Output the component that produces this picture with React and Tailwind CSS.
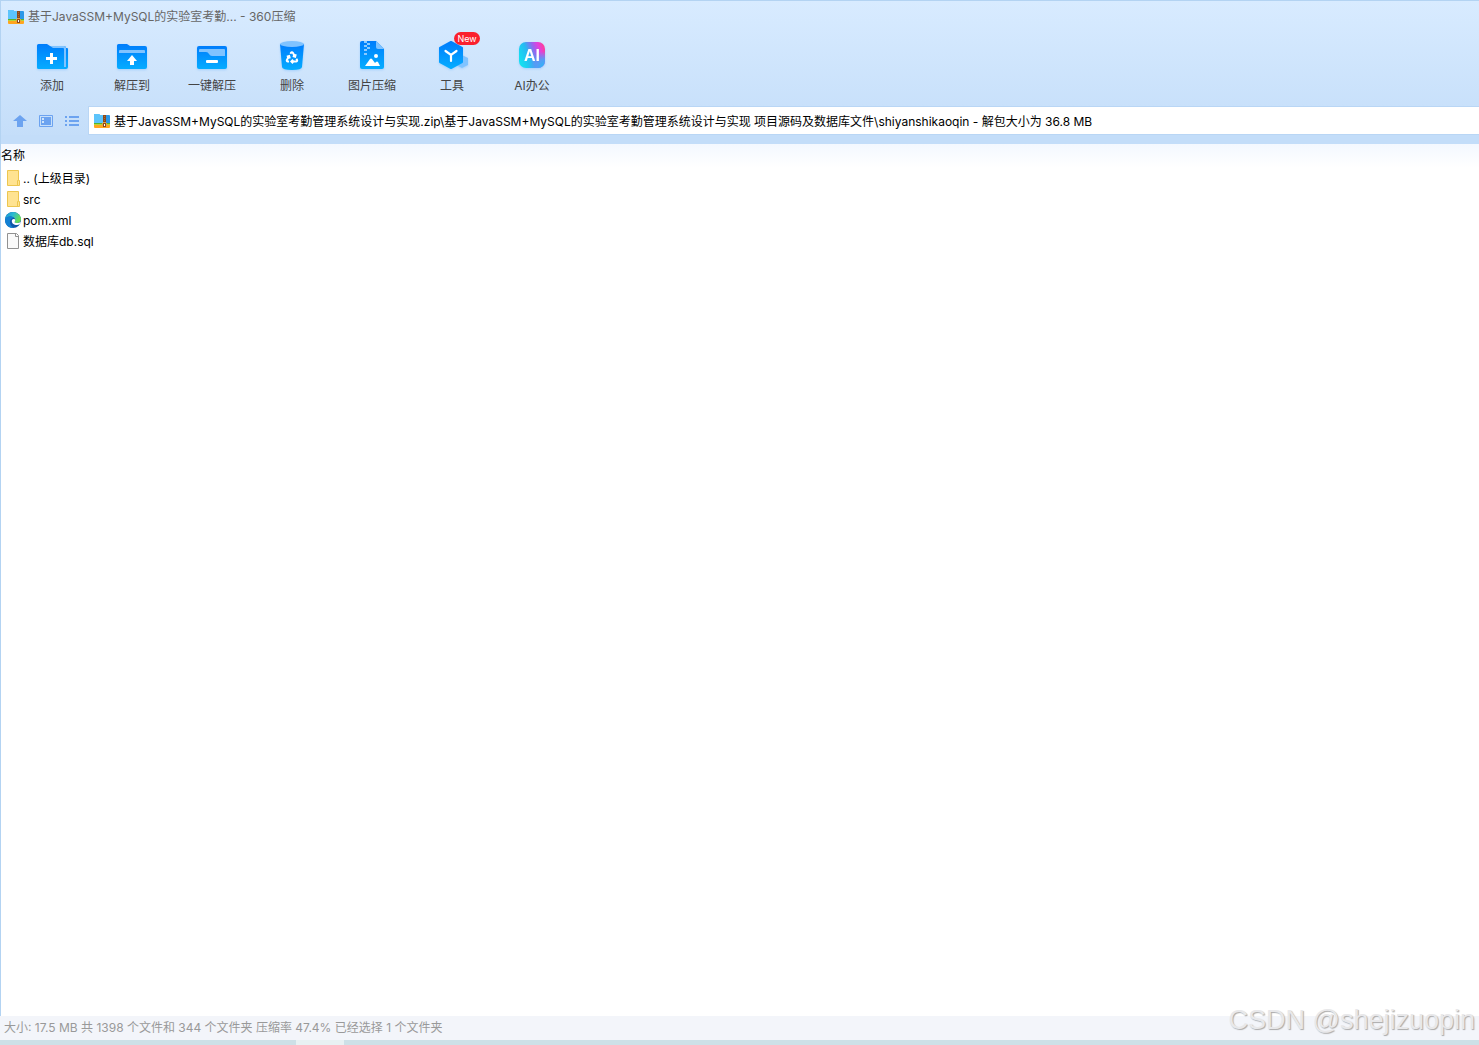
import { useState } from "react"

const archivePath =
  "基于JavaSSM+MySQL的实验室考勤管理系统设计与实现.zip\\基于JavaSSM+MySQL的实验室考勤管理系统设计与实现 项目源码及数据库文件\\shiyanshikaoqin - 解包大小为 36.8 MB"

function ArchiveIcon() {
  return (
    <svg width="16" height="14" viewBox="0 0 16 14" className="shrink-0" aria-hidden="true">
      <path d="M0 1q0-1 1-1h4l1 1h9q1 0 1 1v9H0z" fill="#2a97e8" />
      <path d="M0 1q0-1 1-1h4l1 1h4v9H0z" fill="#5cc4fb" />
      <path d="M0 9h16v2H0z" fill="#57b32c" />
      <path d="M0 11h16v2q0 1-1 1H1q-1 0-1-1z" fill="#ffa51f" />
      <path d="M0 10h16v1H0z" fill="#b5d63c" />
      <path d="M9 1h3v12H9z" fill="#8c4a1c" />
      <path d="M10 2h1v1h-1zM10 4h1v1h-1zM10 6h1v1h-1z" fill="#b06a2e" />
      <path d="M9 8h3v1H9zM8 9h1v3H8zM12 9h1v3h-1z" fill="#e8a23c" />
      <path d="M10 10h1v2h-1z" fill="#fff" />
    </svg>
  )
}

function Blue({ id }) {
  return (
    <defs>
      <linearGradient id={id} x1="0" y1="0" x2="0" y2="1">
        <stop offset="0" stopColor="#007dfc" />
        <stop offset="1" stopColor="#05acff" />
      </linearGradient>
    </defs>
  )
}

function AddIcon() {
  return (
    <>
      <Blue id="add" />
      <path d="M1 5.500Q1 4 2.500 4H11l3 2h14q2 0 2 2h1q1 0 1 1v18q0 2-2 2H2.500Q1 29 1 27.500z" fill="url(#add)" />
      <path d="M14 6h14q2 0 2 2v19h-2V9q0-1-1-1H17z" fill="#80c3ff" />
      <path d="M14 13h3v4h4v3h-4v4h-3v-4h-4v-3h4z" fill="#fff" />
    </>
  )
}

function ExtractIcon() {
  return (
    <>
      <Blue id="extract" />
      <path d="M1 5.500Q1 4 2.500 4H11l3 2h15q2 0 2 2v19q0 2-2 2H3q-2 0-2-2z" fill="url(#extract)" />
      <path d="M3 13v-2q0-1 1-1h24q1 0 1 1v2z" fill="#80c3ff" />
      <path d="M16 15l5 6h-3v4h-4v-4h-3z" fill="#fff" />
    </>
  )
}

function QuickExtractIcon() {
  return (
    <>
      <Blue id="quick" />
      <rect x="1" y="6" width="30" height="23" rx="2" fill="url(#quick)" />
      <path d="M3 10q0-1 1-1h24q1 0 1 1v6H16q-2 0-3-2-1-2-3-2H3z" fill="#80c3ff" />
      <rect x="10" y="20" width="12" height="3" rx="1" fill="#fff" />
    </>
  )
}

function DeleteIcon() {
  return (
    <>
      <Blue id="delete" />
      <path d="M4 4h24l-2 23q-.3 3-10 3T6 27z" fill="url(#delete)" />
      <ellipse cx="16" cy="4" rx="12" ry="3" fill="#80c3ff" />
      <g transform="translate(9 10.500) scale(.58)" fill="none" stroke="#fff" strokeWidth="3.400">
        <path d="M7 19H4.800a1.800 1.800 0 0 1-1.600-2.700L7.200 9.500M11 19h8.200a1.800 1.800 0 0 0 1.600-2.700l-1.200-2M14 16l-3 3 3 3M8.300 13.600L7.200 9.500 3.100 10.600M9.300 5.800l1.100-1.900a1.800 1.800 0 0 1 3.100 0l4 6.900M13.400 9.600l4.100 1.100 1.100-4.100" />
      </g>
    </>
  )
}

function ImageZipIcon() {
  return (
    <>
      <Blue id="image" />
      <path d="M4 3q0-2 2-2h14l8 8v18q0 2-2 2H6q-2 0-2-2z" fill="url(#image)" />
      <path d="M20 1l8 8h-6q-2 0-2-2z" fill="#80c3ff" />
      <path d="M8 1h3v2H8zM11 3h3v2h-3zM8 5h3v2H8zM11 7h3v2h-3zM8 9h3v2H8zM8 13h3v2H8z" fill="#8ccaff" />
      <circle cx="20" cy="16" r="2" fill="#fff" />
      <path d="M9 26l5-7q1-1 2 0l3 4 1-1q1-1 2 0l2 4z" fill="#fff" />
    </>
  )
}

function ToolsIcon() {
  return (
    <>
      <Blue id="tools" />
      <path d="M26 15l6 3v7l-6 3-6-3z" fill="#80c3ff" />
      <path d="M15 2l11 6v14l-11 6-11-6V8z" fill="url(#tools)" stroke="url(#tools)" strokeWidth="2" strokeLinejoin="round" />
      <path d="M9.500 11l5.500 4 5.500-4M15 15v6" fill="none" stroke="#fff" strokeWidth="2.200" strokeLinecap="round" />
    </>
  )
}

function AiIcon() {
  return (
    <>
      <defs>
        <linearGradient id="ai" x1="0" y1=".6" x2="1" y2=".2">
          <stop offset="0" stopColor="#14dff0" />
          <stop offset=".35" stopColor="#27b9f2" />
          <stop offset=".62" stopColor="#9b62ee" />
          <stop offset=".8" stopColor="#e33fdd" />
          <stop offset="1" stopColor="#ff3f91" />
        </linearGradient>
        <radialGradient id="aiCorner" cx="1" cy="1" r=".65">
          <stop offset="0" stopColor="#20bdf7" />
          <stop offset=".5" stopColor="#559cf5" />
          <stop offset="1" stopColor="#559cf5" stopOpacity="0" />
        </radialGradient>
      </defs>
      <rect x="3" y="2" width="26" height="26" rx="7" fill="url(#ai)" />
      <rect x="3" y="2" width="26" height="26" rx="7" fill="url(#aiCorner)" />
      <text x="16" y="21" textAnchor="middle" fill="#fff" fontSize="16" fontWeight="700" fontFamily="Liberation Sans, sans-serif">
        AI
      </text>
    </>
  )
}

const tools = [
  { label: "添加", Icon: AddIcon },
  { label: "解压到", Icon: ExtractIcon },
  { label: "一键解压", Icon: QuickExtractIcon },
  { label: "删除", Icon: DeleteIcon },
  { label: "图片压缩", Icon: ImageZipIcon },
  { label: "工具", Icon: ToolsIcon, badge: "New" },
  { label: "AI办公", Icon: AiIcon },
]

function ToolButton({ label, Icon, badge }) {
  return (
    <button type="button" className="relative flex w-20 flex-col items-center gap-1 text-[#444]">
      <svg width="32" height="34" viewBox="0 0 32 34" className="drop-shadow-xs drop-shadow-[#0080ff]/20" aria-hidden="true">
        <Icon />
      </svg>
      <span className="leading-4">{label}</span>
      {badge && (
        <span className="absolute -top-2 left-[42px] flex h-[13px] w-[26px] items-center justify-center rounded-full bg-[#fa202d] text-[9px] text-white">
          {badge}
        </span>
      )}
    </button>
  )
}

function FolderIcon() {
  return (
    <svg width="16" height="16" viewBox="0 0 16 16" aria-hidden="true">
      <path d="M2.500.5h11v10h1v5h-12z" fill="#ffe391" stroke="#edc64f" />
      <path d="M12.500 15v-4.500h1" fill="none" stroke="#edc64f" />
    </svg>
  )
}

function EdgeIcon() {
  return (
    <svg width="16" height="16" viewBox="0 0 16 16" aria-hidden="true">
      <defs>
        <linearGradient id="edgeTop" x1="0" y1="0" x2="1" y2=".4">
          <stop offset="0" stopColor="#168fd5" />
          <stop offset=".5" stopColor="#2bb9d3" />
          <stop offset="1" stopColor="#67df55" />
        </linearGradient>
      </defs>
      <circle cx="8" cy="8" r="8" fill="#0f57a8" />
      <path d="M0 8C0 3 4 0 8 0c5 0 8 4 8 7 0 2.500-2 4-4 4-1.500 0-2.500-.5-2.500-1 0-.4.7-.8.7-2C10.200 6 8 4.500 5.500 4.500 2.500 4.500.5 6 0 8z" fill="url(#edgeTop)" />
      <path d="M0 8c.5-2.400 2.700-3.500 5.200-3.500 1.700 0 3 .6 3.800 1.500C6.500 5.500 5 8 5 10c0 3 2 5 4 5.900C4 16.500 0 13 0 8z" fill="#1380d3" />
      <path d="M7 8c.8-1.300 3-1.200 3.200.2.1 1-.7 1.400-.7 1.900 0 .6 1.200 1 2.500 1 1.400 0 2.800-.5 3.800-1.300q-.2 1.200-.8 2c-1 .8-2 1.200-3 1.200C9 13 6 11 7 8z" fill="#fff" />
    </svg>
  )
}

function FileIcon() {
  return (
    <svg width="16" height="16" viewBox="0 0 16 16" aria-hidden="true">
      <path d="M2.500.5h9l2 2v13h-11z" fill="#fafafa" stroke="#919191" />
      <path d="M10.500 1v2.500H13" fill="none" stroke="#919191" />
    </svg>
  )
}

const files = [
  { name: ".. (上级目录)", Icon: FolderIcon },
  { name: "src", Icon: FolderIcon },
  { name: "pom.xml", Icon: EdgeIcon },
  { name: "数据库db.sql", Icon: FileIcon },
]

export default function App() {
  const [path, setPath] = useState(archivePath)

  return (
    <div className="relative flex h-screen flex-col overflow-hidden bg-white font-['Inter','Noto_Sans_CJK_SC',sans-serif] text-[12px] text-black">
      <header className="flex flex-col border-t border-l border-[#b3d3f2] bg-linear-to-b from-[#d8ebff] to-[#c3ddf9]">
        <div className="flex h-[31px] items-center gap-1 pl-[7px] text-[#666]">
          <ArchiveIcon />
          <h1>基于JavaSSM+MySQL的实验室考勤... - 360压缩</h1>
        </div>

        <nav className="flex h-[74px] pt-2 pl-[11px]">
          {tools.map((tool) => (
            <ToolButton key={tool.label} {...tool} />
          ))}
        </nav>

        <div className="flex h-[29px] items-center">
          <div className="flex w-[87px] shrink-0 items-center gap-3 pl-3 text-[#6ca3f0]">
            <button type="button" aria-label="向上">
              <svg width="14" height="14" viewBox="0 0 14 14" fill="currentColor" aria-hidden="true">
                <path d="M7 1l7 6h-4v6H4V7H0z" />
              </svg>
            </button>
            <button type="button" aria-label="预览">
              <svg width="14" height="14" viewBox="0 0 14 14" fill="currentColor" aria-hidden="true">
                <path d="M.5 1.500h13v11H.5z" fill="none" stroke="currentColor" />
                <path d="M2 3h10v8H2z" />
                <path d="M3 4h2v2H3zM3 7h2v2H3z" fill="#cfe4fb" />
              </svg>
            </button>
            <button type="button" aria-label="列表">
              <svg width="14" height="14" viewBox="0 0 14 14" fill="currentColor" aria-hidden="true">
                <path d="M0 2h2v2H0zM4 2h10v2H4zM0 6h2v2H0zM4 6h10v2H4zM0 10h2v2H0zM4 10h10v2H4z" />
              </svg>
            </button>
          </div>
          <label className="flex h-full min-w-0 flex-1 items-center gap-1 border-y border-l border-[#b9d6f5] bg-white pl-[5px]">
            <ArchiveIcon />
            <input
              type="text"
              aria-label="路径"
              value={path}
              onChange={(e) => setPath(e.target.value)}
              className="h-full min-w-0 flex-1 bg-transparent outline-none"
            />
          </label>
        </div>
        <div className="h-[9px] bg-[#c3ddf9]" />
      </header>

      <main className="flex-1 border-l border-[#b3d3f2]">
        <table className="w-full">
          <thead>
            <tr className="h-6 bg-linear-to-b from-[#f3f8ff] to-white">
              <th scope="col" className="p-0 text-left font-normal">
                名称
              </th>
            </tr>
          </thead>
          <tbody>
            {files.map(({ name, Icon }) => (
              <tr key={name}>
                <td className="p-0">
                  <div className="flex h-[21px] items-start gap-0.5 pt-0.5 pl-1">
                    <Icon />
                    <span className="leading-[18px]">{name}</span>
                  </div>
                </td>
              </tr>
            ))}
          </tbody>
        </table>
      </main>

      <footer className="flex h-6 items-center bg-[#f3f5fa] pl-1 text-[#999]">
        大小: 17.5 MB 共 1398 个文件和 344 个文件夹 压缩率 47.4% 已经选择 1 个文件夹
      </footer>
      <div className="flex h-[5px] bg-[#cde0e7]">
        <div className="ml-[20%] w-12 bg-[#e8f1f3]" />
      </div>

      <div className="pointer-events-none absolute right-1 bottom-[5px] font-['Liberation_Sans',sans-serif] text-[27px] text-[#e8e8ea] text-shadow-[1px_1px_1px_#aaa]">
        CSDN @shejizuopin
      </div>
    </div>
  )
}
